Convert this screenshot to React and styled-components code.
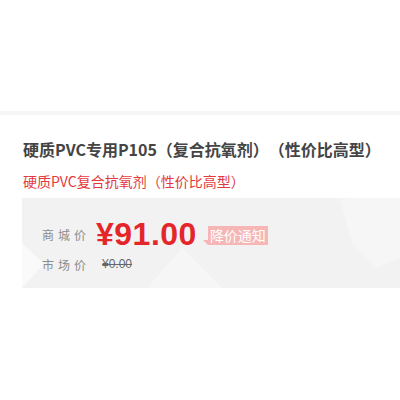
import React from 'react'
import styled, { createGlobalStyle } from 'styled-components'

const Global = createGlobalStyle`
  html, body {
    margin: 0;
    padding: 0;
    background: #fff;
  }
  body {
    font-family: "Noto Sans CJK SC", "Noto Sans", "Liberation Sans", sans-serif;
    text-spacing-trim: space-all;
  }
`

const Page = styled.div`
  width: 400px;
  height: 400px;
  overflow: hidden;
  padding-top: 111px;
  box-sizing: border-box;
`

const Strip = styled.div`
  height: 4px;
  background: #f6f6f6;
`

const Info = styled.div`
  padding: 22px 0 0 23px;
`

const Title = styled.h1`
  margin: 0;
  font-size: 16px;
  line-height: 24px;
  font-weight: 700;
  color: #444;
  white-space: nowrap;
`

const SubTitle = styled.p`
  margin: 10px 0 0;
  font-size: 14px;
  line-height: 20px;
  color: #e4393c;
  white-space: nowrap;
`

const PriceBox = styled.div`
  position: relative;
  margin-top: 7px;
  margin-left: -1px;
  height: 90px;
  background: #f2f2f2;
  overflow: hidden;
  padding: 20px 0 0 20px;
  box-sizing: border-box;
`

const Deco = styled.svg`
  position: absolute;
  left: 0;
  top: 0;
  width: 100%;
  height: 100%;
  pointer-events: none;
`

const Row = styled.div`
  position: relative;
  display: flex;
  align-items: center;
  height: ${p => p.$h}px;
`

const Label = styled.span`
  width: 54px;
  font-size: 12px;
  color: #8c8c8c;
  letter-spacing: 4px;
  white-space: nowrap;
`

const Price = styled.span`
  font-family: "Liberation Sans", "Noto Sans", sans-serif;
  font-size: 32px;
  font-weight: 700;
  color: #e4262b;
  letter-spacing: 0.5px;
`

const Badge = styled.span`
  position: relative;
  margin-left: 11px;
  margin-top: 2px;
  background: #f6b6b6;
  color: #fff;
  font-size: 14px;
  line-height: 19px;
  padding: 0 2px;
  &::before {
    content: '';
    position: absolute;
    left: -5px;
    bottom: 0;
    border-style: solid;
    border-width: 0 5px 5px 0;
    border-color: transparent #f6b6b6 transparent transparent;
  }
`

const OldPrice = styled.span`
  margin-left: 6px;
  font-family: "Liberation Sans", "Noto Sans", sans-serif;
  font-size: 12px;
  color: #666;
  text-decoration: line-through;
`

export default function App() {
  return (
    <Page>
      <Global />
      <Strip />
      <Info>
        <Title>硬质PVC专用P105（复合抗氧剂）（性价比高型）</Title>
        <SubTitle>硬质PVC复合抗氧剂（性价比高型）</SubTitle>
        <PriceBox>
          <Deco viewBox="0 0 378 90" preserveAspectRatio="none">
            <polygon points="0,45 22,66 0,90" fill="#fafafa" />
            <polygon points="125,90 160,50 200,90" fill="#f6f6f6" />
            <polygon points="318,2 360,-10 378,0 378,60 355,70 330,45" fill="#f6f6f6" />
          </Deco>
          <Row $h={32}>
            <Label>商城价</Label>
            <Price>¥91.00</Price>
            <Badge>降价通知</Badge>
          </Row>
          <Row $h={28}>
            <Label>市场价</Label>
            <OldPrice>¥0.00</OldPrice>
          </Row>
        </PriceBox>
      </Info>
    </Page>
  )
}
